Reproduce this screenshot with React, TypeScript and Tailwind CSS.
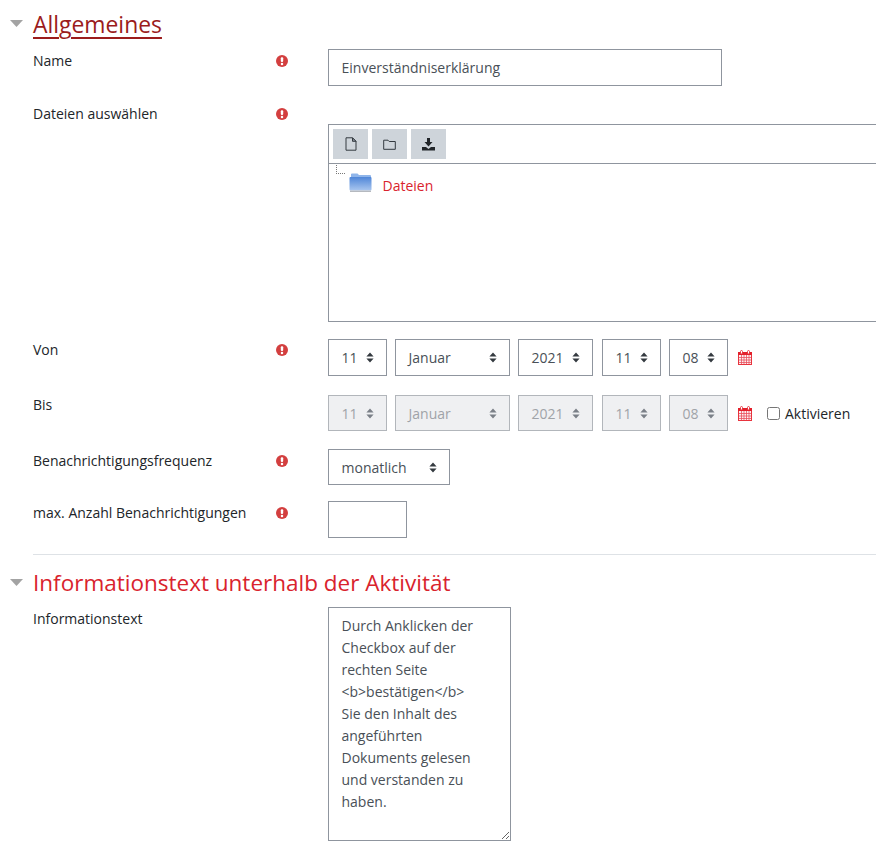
import React from "react";

const font = "font-['Open_Sans','Noto_Sans',sans-serif]";

function Req() {
  return (
    <svg width="12" height="12" viewBox="0 0 12 12" className="shrink-0">
      <circle cx="6" cy="6" r="6" fill="#d33f3f" />
      <rect x="4.8" y="2.2" width="2.4" height="4.8" rx="1" fill="#fff" />
      <circle cx="6" cy="8.9" r="1.25" fill="#fff" />
    </svg>
  );
}

function Updown({ dim }: { dim?: boolean }) {
  return (
    <svg width="8" height="11" viewBox="0 0 8 11" className="shrink-0">
      <path d="M4 0.5 L7.6 4.4 H0.4 Z M4 10.5 L0.4 6.6 H7.6 Z" fill={dim ? "#7b8088" : "#343a40"} />
    </svg>
  );
}

function Caret() {
  return (
    <svg width="13" height="7" viewBox="0 0 13 7" className="shrink-0">
      <path d="M0 0 H13 L6.5 7 Z" fill="#a3a3a3" />
    </svg>
  );
}

function Cal() {
  return (
    <svg width="14" height="15" viewBox="0 0 14 15" className="shrink-0">
      <rect x="0.5" y="2.5" width="13" height="12" fill="#fdeef0" stroke="#e8343e" />
      <rect x="0" y="2" width="14" height="3" fill="#e3202b" />
      <rect x="2.5" y="0.5" width="2" height="3.5" rx="1" fill="#fff" stroke="#e3202b" strokeWidth="0.8" />
      <rect x="9.5" y="0.5" width="2" height="3.5" rx="1" fill="#fff" stroke="#e3202b" strokeWidth="0.8" />
      <path d="M3.5 5 V14 M6 5 V14 M8.5 5 V14 M11 5 V14 M1 7.5 H13 M1 10 H13 M1 12.5 H13" stroke="#e8505e" strokeWidth="0.8" />
    </svg>
  );
}

function Sel({ text, w, dim, h = "h-[37px]", pl = "pl-[12.5px]", pr = "pr-[12px]" }: { text: string; w: string; dim?: boolean; h?: string; pl?: string; pr?: string }) {
  return (
    <div
      className={`${w} ${h} ${pl} ${pr} flex items-center justify-between border text-[14px] ${
        dim ? "border-[#b2b6bb] bg-[#eff0f2] text-[#9fa3a8]" : "border-[#8f959e] bg-white text-[#495057]"
      }`}
    >
      <span>{text}</span>
      <Updown dim={dim} />
    </div>
  );
}

function Row({ label, req, className, labelClass = "pt-[1px]", children }: { label: string; req?: boolean; className?: string; labelClass?: string; children: React.ReactNode }) {
  return (
    <div className={`flex ${className ?? ""}`}>
      <div className={`w-[295px] shrink-0 flex items-start text-[14px] leading-[22px] text-[#212529] ${labelClass}`}>
        <span className="w-[243px] shrink-0">{label}</span>
        <span className="w-[52px] pt-[5px]">{req && <Req />}</span>
      </div>
      <div className="min-w-0 flex-1">{children}</div>
    </div>
  );
}

function ToolBtn({ children }: { children: React.ReactNode }) {
  return <div className="flex h-[30px] w-[35px] items-center justify-center bg-[#ced4da]">{children}</div>;
}

const info =
  "Durch Anklicken der Checkbox auf der rechten Seite <b>bestätigen</b>\nSie den Inhalt des angeführten Dokuments gelesen und verstanden zu haben.";

export default function App() {
  return (
    <div className={`${font} h-[848px] w-[876px] overflow-hidden bg-white pl-[33px]`}>
      <div className="relative pt-[9px]">
        <div className="absolute left-[-23px] top-[20px]"><Caret /></div>
        <h3 className="text-[22.9px] leading-[32px] text-[#9b1c1c] underline decoration-[2px] underline-offset-[4px]">Allgemeines</h3>
      </div>

      <Row label="Name" req className="mt-[8px]">
        <input
          readOnly
          value="Einverständniserklärung"
          className="block h-[37px] w-[394px] border border-[#8f959e] bg-white px-[12.5px] text-[14px] text-[#495057] outline-none"
        />
      </Row>

      <Row label="Dateien auswählen" req className="mt-[16px]">
        <div className="mt-[22px] h-[198px] w-[600px] border border-[#8f959e]">
          <div className="flex h-[39px] gap-[4px] border-b border-[#8f959e] pl-[4px] pt-[4px]">
            <ToolBtn>
              <svg width="12" height="14" viewBox="0 0 12 14" fill="none" stroke="#343a40" strokeWidth="1">
                <path d="M1 0.8 H7.5 L11 4.3 V13.2 H1 Z" />
                <path d="M7.5 0.8 V4.3 H11 Z" fill="#8f959e" />
              </svg>
            </ToolBtn>
            <ToolBtn>
              <svg width="13" height="11" viewBox="0 0 13 11" fill="none" stroke="#343a40" strokeWidth="1">
                <path d="M0.7 1.2 H5 L6.2 2.5 H12.3 V10.3 H0.7 Z" />
              </svg>
            </ToolBtn>
            <ToolBtn>
              <svg width="13" height="13" viewBox="0 0 13 13" fill="#212529">
                <path d="M5 0 H8 V4 H10.5 L6.5 8.5 L2.5 4 H5 Z M0 9 H4 L6.5 11 L9 9 H13 V12.5 H0 Z" />
              </svg>
            </ToolBtn>
          </div>
          <div className="relative flex items-start pl-[20px] pt-[9px]">
            <div className="absolute left-[7px] top-[1px] h-[9px] w-[9px] border-b border-l border-dotted border-[#777]" />
            <svg width="23" height="20" viewBox="0 0 23 20" className="shrink-0">
              <defs>
                <linearGradient id="fold" x1="0" y1="0" x2="0" y2="1">
                  <stop offset="0" stopColor="#4f86d8" />
                  <stop offset="1" stopColor="#a9c6ef" />
                </linearGradient>
              </defs>
              <path d="M2 3 V1.2 Q2 0.5 3 0.5 H8.5 L10 2 H21 Q22 2 22 3 V5 H2 Z" fill="#8fb5ea" />
              <rect x="0.5" y="4" width="22" height="13.5" rx="1" fill="url(#fold)" />
              <rect x="1" y="17.5" width="21" height="1.5" fill="#b5b9bf" />
            </svg>
            <span className="ml-[10.5px] pt-[1px] text-[14px] leading-[24px] text-[#d9232d]">Dateien</span>
          </div>
        </div>
      </Row>

      <Row label="Von" req className="mt-[17px]" labelClass="">
        <div className="flex items-center">
          <Sel text="11" w="w-[59px]" />
          <Sel text="Januar" w="w-[115px] ml-[8px]" />
          <Sel text="2021" w="w-[75px] ml-[8px]" />
          <Sel text="11" w="w-[59px] ml-[9px]" />
          <Sel text="08" w="w-[59px] ml-[8px]" />
          <span className="ml-[10px]"><Cal /></span>
        </div>
      </Row>

      <Row label="Bis" className="mt-[19px]" labelClass="-mt-[1px]">
        <div className="flex items-center">
          <Sel dim h="h-[36px]" text="11" w="w-[59px]" />
          <Sel dim h="h-[36px]" text="Januar" w="w-[115px] ml-[8px]" />
          <Sel dim h="h-[36px]" text="2021" w="w-[75px] ml-[8px]" />
          <Sel dim h="h-[36px]" text="11" w="w-[59px] ml-[9px]" />
          <Sel dim h="h-[36px]" text="08" w="w-[59px] ml-[8px]" />
          <span className="ml-[10px]"><Cal /></span>
          <input type="checkbox" readOnly className="ml-[15px] h-[13px] w-[13px]" />
          <span className="ml-[5px] text-[14px] text-[#212529]">Aktivieren</span>
        </div>
      </Row>

      <Row label="Benachrichtigungsfrequenz" req className="mt-[18px]">
        <Sel text="monatlich" w="w-[122px]" h="h-[36px]" />
      </Row>

      <Row label="max. Anzahl Benachrichtigungen" req className="mt-[16px]">
        <input readOnly className="block h-[37px] w-[79px] border border-[#8f959e] bg-white outline-none" />
      </Row>

      <hr className="mt-[16px] border-0 border-t border-[#dee2e6]" />

      <div className="relative mt-[12px]">
        <div className="absolute left-[-23px] top-[12px]"><Caret /></div>
        <h3 className="text-[22.5px] leading-[32px] text-[#d9232d]">Informationstext unterhalb der Aktivität</h3>
      </div>

      <Row label="Informationstext" className="mt-[8px]">
        <textarea
          readOnly
          defaultValue={info}
          className="block h-[234px] w-[183px] border border-[#8f959e] bg-white pl-[12.5px] pr-[13px] pt-[7px] text-[14px] leading-[22px] text-[#495057] outline-none"
        />
      </Row>
    </div>
  );
}
